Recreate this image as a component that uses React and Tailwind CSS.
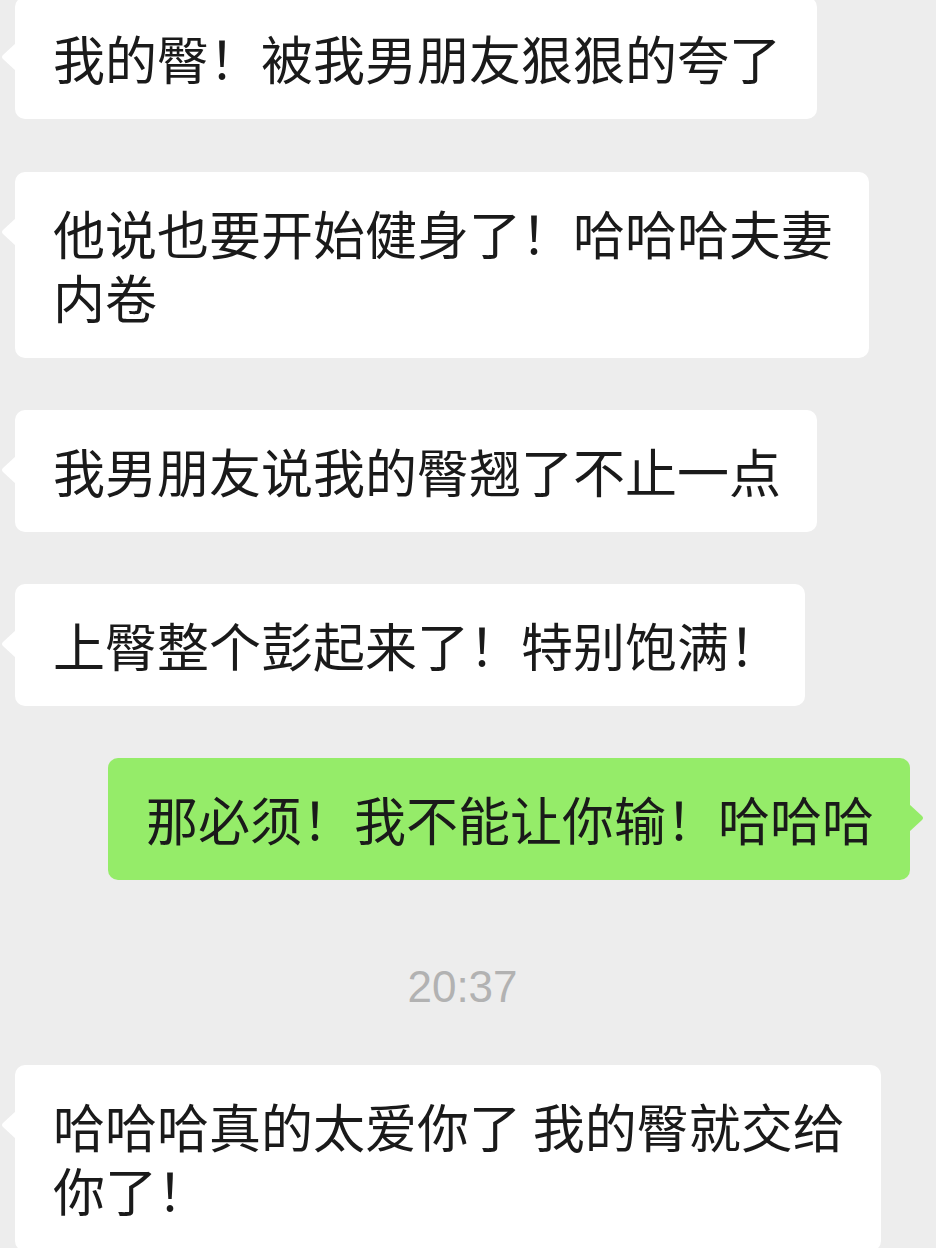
import React from "react";

const messages = [
  { side: "left", lines: ["我的臀！被我男朋友狠狠的夸了"], mt: "-mt-[3px]" },
  { side: "left", lines: ["他说也要开始健身了！哈哈哈夫妻", "内卷"], mt: "mt-[53px]" },
  { side: "left", lines: ["我男朋友说我的臀翘了不止一点"], mt: "mt-[52px]" },
  { side: "left", lines: ["上臀整个彭起来了！特别饱满！"], mt: "mt-[52px]", pr: "pr-[24px]" },
  { side: "right", lines: ["那必须！我不能让你输！哈哈哈"], mt: "mt-[52px]" },
  { side: "time", text: "20:37", mt: "mt-[85px]" },
  { side: "left", lines: ["哈哈哈真的太爱你了 我的臀就交给", "你了！"], mt: "mt-[56px]" },
];

const LeftTail = () => (
  <svg className="absolute left-[-15px] top-[46px]" width="16" height="28" viewBox="0 0 16 28">
    <path d="M16 0 L16 28 L3 16 Q1 14 3 12 Z" fill="#ffffff" />
  </svg>
);

const RightTail = () => (
  <svg className="absolute right-[-15px] top-[46px]" width="16" height="28" viewBox="0 0 16 28">
    <path d="M0 0 L0 28 L13 16 Q15 14 13 12 Z" fill="#95ec69" />
  </svg>
);

function Bubble({ msg }) {
  const isRight = msg.side === "right";
  return (
    <div className={`flex ${isRight ? "justify-end" : "justify-start"} ${msg.mt}`}>
      <div
        className={`relative rounded-[10px] pl-[38px] ${msg.pr || "pr-[36px]"} py-[29px] text-[52px] leading-[64px] text-[#1a1a1a] whitespace-nowrap ${
          isRight ? "bg-[#95ec69]" : "bg-white"
        }`}
      >
        {isRight ? <RightTail /> : <LeftTail />}
        {msg.lines.map((line, i) => (
          <div key={i}>{line}</div>
        ))}
      </div>
    </div>
  );
}

export default function App() {
  return (
    <main
      className="h-[1248px] overflow-hidden bg-[#ededed]"
      style={{ fontFamily: '"Noto Sans CJK SC", "Noto Sans", sans-serif' }}
    >
      <div className="flex flex-col pl-[15px] pr-[26px]">
        {messages.map((msg, i) =>
          msg.side === "time" ? (
            <div
              key={i}
              className={`${msg.mt} text-center text-[44px] leading-none text-[#b2b2b2]`}
              style={{ fontFamily: '"Liberation Sans", Arial, sans-serif' }}
            >
              {msg.text}
            </div>
          ) : (
            <Bubble key={i} msg={msg} />
          )
        )}
      </div>
    </main>
  );
}
